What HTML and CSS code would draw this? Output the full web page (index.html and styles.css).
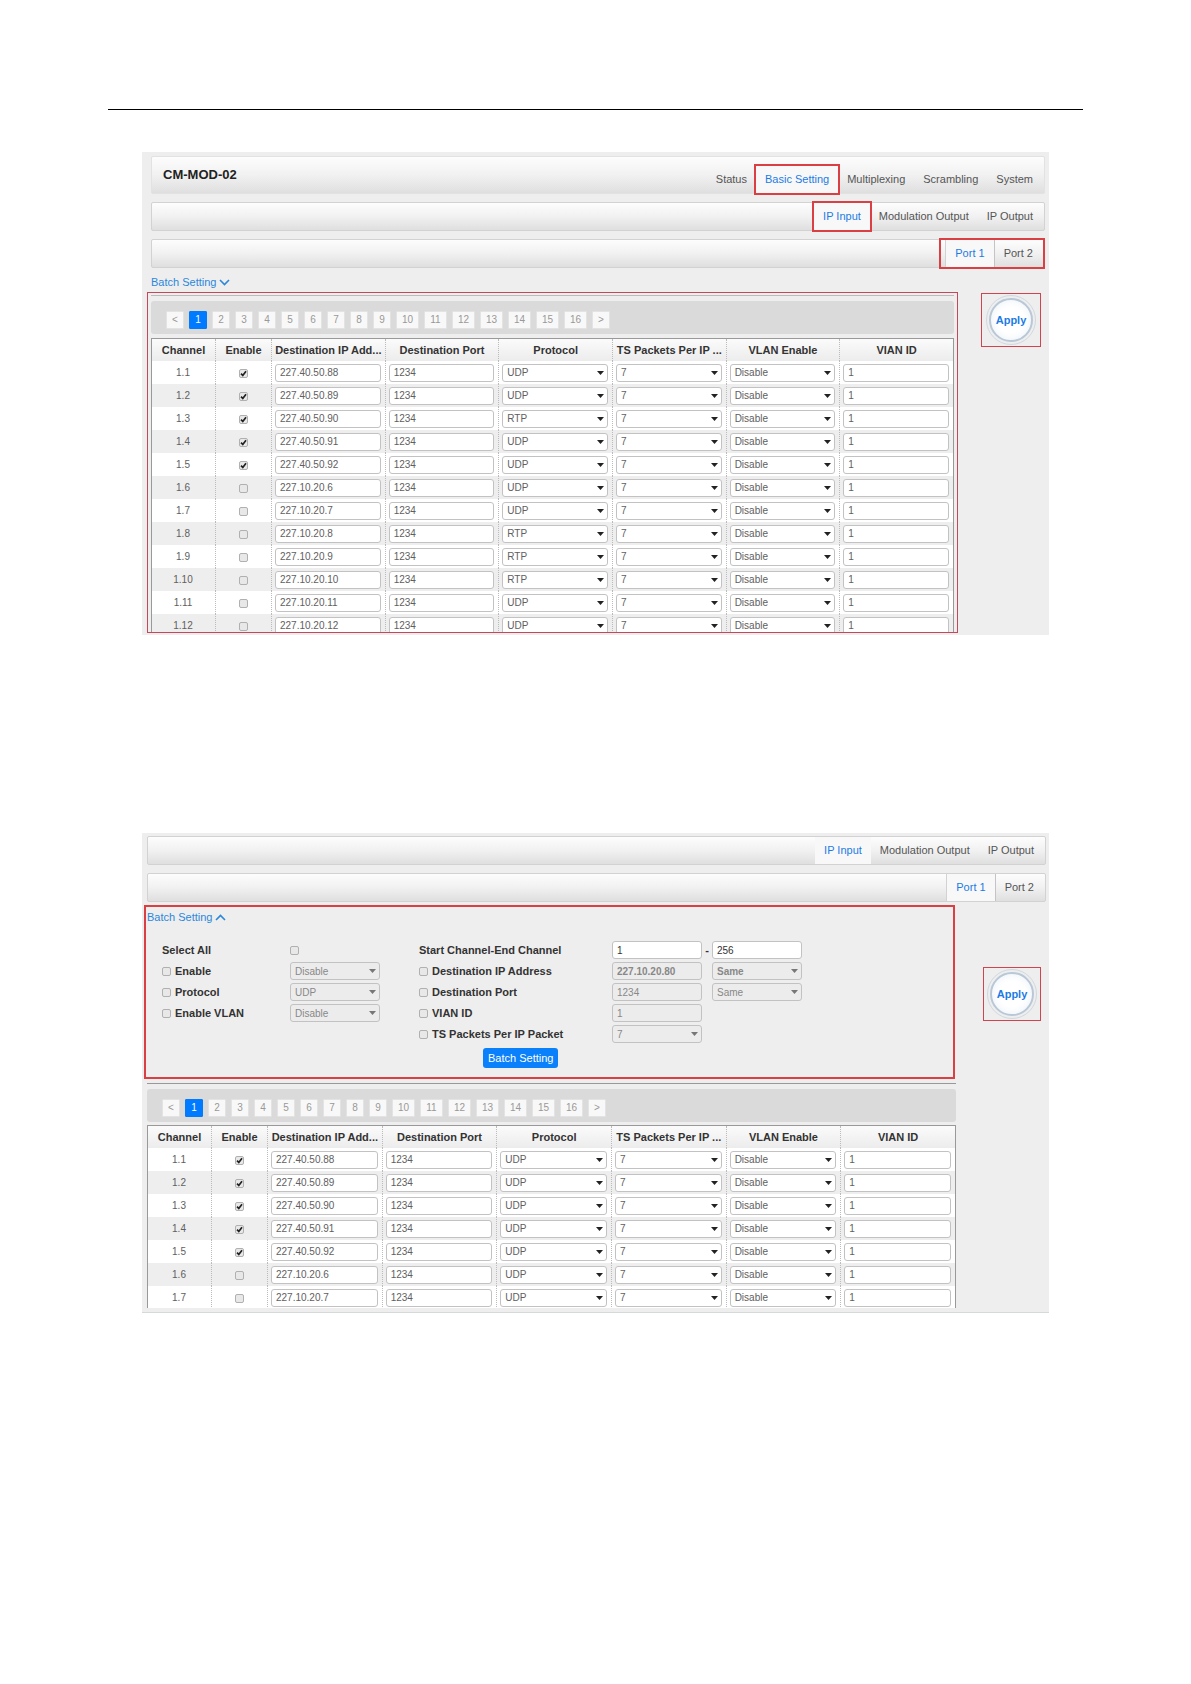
FILE: index.html
```html
<!DOCTYPE html>
<html lang="en">
<head>
  <meta charset="UTF-8" />
  <meta name="viewport" content="width=device-width, initial-scale=1.0"/>
  <title>CM-MOD-02 IP Input</title>
  <link rel="stylesheet" href="styles.css">
</head>
<body>

  <hr class="page-rule">

  <section class="panel panel-full">
    <header class="bar bar-title">
      <h1>CM-MOD-02</h1>
      <nav class="tabs">
        <a href="#">Status</a>
        <a href="#" class="active marked">Basic Setting</a>
        <a href="#">Multiplexing</a>
        <a href="#">Scrambling</a>
        <a href="#">System</a>
      </nav>
    </header>
    <div class="bar">
      <nav class="tabs">
        <a href="#" class="active marked">IP Input</a>
        <a href="#">Modulation Output</a>
        <a href="#">IP Output</a>
      </nav>
    </div>
    <div class="bar">
      <nav class="tabs marked ports">
        <a href="#" class="active">Port 1</a>
        <a href="#">Port 2</a>
      </nav>
    </div>

    <a href="#" class="batch-link">Batch Setting
      <svg width="11" height="7" viewBox="0 0 11 7"><path d="M1 1l4.5 4.5L10 1" fill="none" stroke="currentColor" stroke-width="1.6"/></svg>
    </a>

    <div class="columns">
      <div class="frame">
        <div class="pager"></div>
        <div class="table-clip">
          <table class="channels" data-rows="12" data-rtp="3,8,9,10"></table>
        </div>
      </div>
      <div class="apply-box"><button class="apply">Apply</button></div>
    </div>
  </section>

  <section class="panel panel-batch">
    <div class="bar">
      <nav class="tabs">
        <a href="#" class="active">IP Input</a>
        <a href="#">Modulation Output</a>
        <a href="#">IP Output</a>
      </nav>
    </div>
    <div class="bar">
      <nav class="tabs ports">
        <a href="#" class="active">Port 1</a>
        <a href="#">Port 2</a>
      </nav>
    </div>

    <div class="columns">
      <div class="content">
        <form class="batch">
          <a href="#" class="batch-link">Batch Setting
            <svg width="11" height="7" viewBox="0 0 11 7"><path d="M1 6l4.5-4.5L10 6" fill="none" stroke="currentColor" stroke-width="1.6"/></svg>
          </a>
          <div class="fields">
            <div class="fields-left">
              <label for="select-all">Select All</label>
              <input type="checkbox" id="select-all">
              <label><input type="checkbox"> Enable</label>
              <select disabled aria-label="Enable"><option>Disable</option></select>
              <label><input type="checkbox"> Protocol</label>
              <select disabled aria-label="Protocol"><option>UDP</option></select>
              <label><input type="checkbox"> Enable VLAN</label>
              <select disabled aria-label="Enable VLAN"><option>Disable</option></select>
            </div>
            <div class="fields-right">
              <label for="start">Start Channel-End Channel</label>
              <input type="text" id="start" value="1">
              <span class="dash">-</span>
              <input type="text" value="256" aria-label="End Channel">
              <label class="first"><input type="checkbox"> Destination IP Address</label>
              <input type="text" class="strong" value="227.10.20.80" disabled aria-label="Destination IP Address">
              <select class="strong last" disabled aria-label="Address mode"><option>Same</option></select>
              <label class="first"><input type="checkbox"> Destination Port</label>
              <input type="text" value="1234" disabled aria-label="Destination Port">
              <select class="last" disabled aria-label="Port mode"><option>Same</option></select>
              <label class="first"><input type="checkbox"> VIAN ID</label>
              <input type="text" value="1" disabled aria-label="VIAN ID">
              <label class="first"><input type="checkbox"> TS Packets Per IP Packet</label>
              <select disabled aria-label="TS Packets Per IP Packet"><option>7</option></select>
            </div>
          </div>
          <button type="button" class="submit">Batch Setting</button>
        </form>
        <div class="pager"></div>
        <div class="table-clip">
          <table class="channels" data-rows="7" data-rtp=""></table>
        </div>
      </div>
      <div class="apply-box"><button class="apply">Apply</button></div>
    </div>
  </section>

  <script>
    const heads = ["Channel", "Enable", "Destination IP Add...", "Destination Port",
      "Protocol", "TS Packets Per IP ...", "VLAN Enable", "VIAN ID"];

    // the first five channels are enabled and live on 227.40.50.x
    function address(i) {
      return i <= 5 ? `227.40.50.${87 + i}` : `227.10.20.${i}`;
    }

    document.querySelectorAll(".channels").forEach(table => {
      const rtp = table.dataset.rtp.split(",");
      let html = `<thead><tr>${heads.map(h => `<th>${h}</th>`).join("")}</tr></thead><tbody>`;
      for (let i = 1; i <= Number(table.dataset.rows); i++) {
        const protocol = rtp.includes(String(i)) ? "RTP" : "UDP";
        html += `
          <tr>
            <td>1.${i}</td>
            <td><input type="checkbox" aria-label="Enable 1.${i}" ${i <= 5 ? "checked" : ""}></td>
            <td><input type="text" aria-label="IP 1.${i}" value="${address(i)}"></td>
            <td><input type="text" aria-label="Port 1.${i}" value="1234"></td>
            <td><select aria-label="Protocol 1.${i}"><option>${protocol}</option></select></td>
            <td><select aria-label="Packets 1.${i}"><option>7</option></select></td>
            <td><select aria-label="VLAN 1.${i}"><option>Disable</option></select></td>
            <td><input type="text" aria-label="VLAN ID 1.${i}" value="1"></td>
          </tr>`;
      }
      table.innerHTML = html + "</tbody>";
    });

    document.querySelectorAll(".pager").forEach(pager => {
      const pages = ["&lt;"];
      for (let i = 1; i <= 16; i++) pages.push(i);
      pages.push("&gt;");
      pager.innerHTML = pages.map(p =>
        `<button type="button" class="${p === 1 ? "current" : ""}${p >= 10 ? "wide" : ""}">${p}</button>`
      ).join("");
    });
  </script>
</body>
</html>
```
FILE: styles.css
```css
* {
  box-sizing: border-box;
}
body {
  margin: 0;
  font-family: "Liberation Sans", Arial, sans-serif;
  font-size: 10px;
  background: #fff;
  color: #606060;
}
a {
  color: inherit;
  text-decoration: none;
}
input, select, button {
  font: inherit;
  color: inherit;
  margin: 0;
}
.page-rule {
  margin: 109px 108px 42px;
  border: 0;
  border-top: 1px solid #000;
}
.panel {
  margin: 0 142px 198px;
  background: #eee;
}
.panel-full {
  padding: 4px 4px 2px 5px;
}
.panel-batch {
  padding: 3px 3px 4px 2px;
  border-bottom: 1px solid #d4dada;
  margin-bottom: 0;
}

/* gradient bars */
.bar {
  display: flex;
  justify-content: flex-end;
  height: 29px;
  margin: 0 0 8px 4px;
  border: 1px solid #d2d2d2;
  border-radius: 2px;
  background: linear-gradient(#fdfdfd, #f1f1f1 50%, #dfdfdf);
}
.panel-batch .bar {
  margin-left: 3px;
}
.bar-title {
  justify-content: space-between;
  height: 38px;
  border-color: #e2e2e2;
}
h1 {
  margin: 0;
  padding-left: 11px;
  font-size: 13px;
  line-height: 36px;
  color: #222;
}
.tabs {
  display: flex;
  padding-right: 2px;
}
.tabs a {
  display: flex;
  align-items: center;
  padding: 0 9px 2px;
  font-size: 11px;
  color: #555;
}
.tabs .active {
  background: #f8f8f8;
  color: #1b7be6;
}
.tabs.ports .active {
  border-left: 1px solid #d2d2d2;
  border-right: 1px solid #c4c4c4;
}
.bar-title .tabs {
  padding-top: 9px;
}
.marked {
  outline: 2px solid #d93f43;
}
.ports.marked {
  margin-right: 1px;
  padding: 0 1px 0 4px;
}

.batch-link {
  display: flex;
  align-items: center;
  gap: 3px;
  font-size: 11px;
  color: #2b87dc;
}
.panel-full .batch-link {
  height: 20px;
  margin: -4px 0 0 4px;
}

.columns {
  display: flex;
  align-items: flex-start;
  justify-content: space-between;
}
.frame {
  flex: 1;
  border: 1px solid #c6475a;
  padding: 2px 3px 0;
}
.content {
  flex: 1;
}
.pager {
  display: flex;
  align-items: center;
  gap: 5px;
  height: 33px;
  margin-bottom: 4px;
  padding: 4px 0 0 15px;
  border-radius: 3px;
  background: #dadada;
}
.frame::before {
  content: "";
  display: block;
  margin-bottom: 5px;
  border-top: 1px solid #bbb;
}
.pager button {
  width: 18px;
  height: 18px;
  padding: 0;
  border: 1px solid #e3e3e3;
  border-radius: 1px;
  background: #f8f8f8;
  color: #999;
}
.pager .wide {
  width: 23px;
}
.pager .current {
  border-color: #007bff;
  background: #007bff;
  color: #fff;
}

/* channel table */
.table-clip {
  height: 294px;
  overflow: hidden;
}
.channels {
  width: 100%;
  table-layout: fixed;
  border-collapse: separate;
  border-spacing: 0;
  border: solid #999;
  border-width: 1px 1px 0;
}
.channels th {
  height: 22px;
  padding: 0;
  background: linear-gradient(#fbfbfb, #ececec);
  color: #333;
  font-size: 11px;
  white-space: nowrap;
}
.channels th:nth-child(1) {
  width: 63px;
}
.channels th:nth-child(2) {
  width: 56px;
}
.channels td {
  height: 23px;
  padding: 0 4px 0 3px;
  text-align: center;
  background: #fff;
}
.channels th + th, .channels td + td {
  border-left: 1px dotted #bbb;
}
.channels tr:nth-child(even) td {
  background: #eee;
}

input[type="text"], select {
  display: block;
  width: 100%;
  height: 18px;
  padding: 0 4px;
  border: 1px solid #c2c2c2;
  border-radius: 3px;
  background: #fff;
}
select {
  appearance: none;
  background: #fff url("data:image/svg+xml,%3Csvg xmlns='http://www.w3.org/2000/svg' width='7' height='4'%3E%3Cpath d='M0 0h7L3.5 4z' fill='%23222'/%3E%3C/svg%3E") no-repeat right 3px center;
}
input[type="text"]:disabled, select:disabled {
  background-color: #ececec;
  color: #888;
  opacity: 1;
}
select:disabled {
  background-image: url("data:image/svg+xml,%3Csvg xmlns='http://www.w3.org/2000/svg' width='7' height='4'%3E%3Cpath d='M0 0h7L3.5 4z' fill='%23777'/%3E%3C/svg%3E");
}
input[type="checkbox"] {
  appearance: none;
  width: 9px;
  height: 9px;
  border: 1px solid #b0b0b0;
  border-radius: 2px;
  background: #e8e8e8;
  vertical-align: middle;
}
input[type="checkbox"]:checked {
  background: #e8e8e8 url("data:image/svg+xml,%3Csvg xmlns='http://www.w3.org/2000/svg' width='7' height='7'%3E%3Cpath d='M1 3.6l1.8 1.8L6 1.2' fill='none' stroke='%23222' stroke-width='1.7'/%3E%3C/svg%3E") no-repeat center;
}

/* batch form */
.batch {
  height: 174px;
  margin: -5px 1px 4px 0;
  border: 2px solid #d93f43;
}
.batch .batch-link {
  height: 20px;
  margin-left: 1px;
}
.fields {
  display: flex;
  gap: 39px;
  padding: 14px 0 0 16px;
  font-size: 11px;
  font-weight: bold;
  color: #333;
}
.fields-left, .fields-right {
  display: grid;
  grid-template-columns: 128px 90px;
  grid-auto-rows: 18px;
  row-gap: 3px;
  align-items: center;
  align-content: start;
}
.fields-right {
  grid-template-columns: 193px 90px 10px 90px;
}
.fields label {
  display: flex;
  align-items: center;
  gap: 4px;
}
.fields .first {
  grid-column: 1;
}
.fields .last {
  grid-column: 4;
}
.fields input, .fields select {
  font-size: 10px;
  font-weight: normal;
}
.fields input.strong, .fields select.strong {
  font-weight: bold;
}
.dash {
  text-align: center;
}
.submit {
  display: block;
  height: 20px;
  margin: 5px 0 0 337px;
  padding: 0 5px;
  border: 0;
  border-radius: 3px;
  background: #0a80fb;
  color: #fff;
  font-size: 11px;
}
.content .pager {
  position: relative;
  margin: 10px 0 3px 3px;
}
.content .pager::before {
  content: "";
  position: absolute;
  left: 0;
  right: 0;
  top: -6px;
  border-top: 1px solid #999;
}
.content .table-clip {
  height: 183px;
  margin-left: 3px;
}

.apply-box {
  display: flex;
  align-items: center;
  justify-content: center;
  width: 60px;
  height: 54px;
  margin: 1px 4px 0 23px;
  border: 1px solid #d0434f;
}
.panel-batch .apply-box {
  width: 58px;
  margin: 57px 5px 0 27px;
}
.apply {
  width: 44px;
  height: 44px;
  padding: 0;
  border: 2px solid #b9c7d6;
  border-radius: 50%;
  outline: 1px solid #d0d8e0;
  outline-offset: 2px;
  background: radial-gradient(#fff 45%, #e9f1f7);
  color: #1b7be6;
  font-size: 11px;
  font-weight: bold;
}
```
